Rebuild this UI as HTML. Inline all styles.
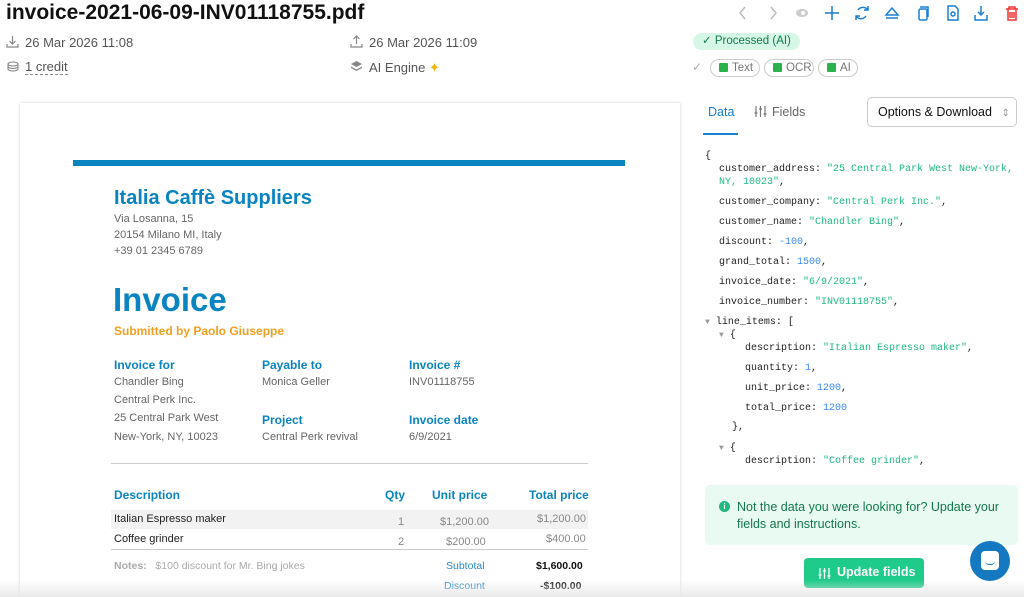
<!DOCTYPE html>
<html><head><meta charset="utf-8"><style>
*{margin:0;padding:0;box-sizing:border-box}
html,body{width:1024px;height:597px;overflow:hidden}
body{background:#fff;font-family:"Liberation Sans",sans-serif;position:relative;color:#111}
.a{position:absolute;white-space:nowrap}
.g{color:#555;font-size:13px}
.b{color:#0a84c1;font-weight:bold}
.iv{color:#666;font-size:11px}
.h{color:#0a84c1;font-weight:bold;font-size:12px}
.m{font-family:"Liberation Mono",monospace;font-size:10px;color:#222}
.s{color:#1fb981}.n{color:#3a86f0}
.tag{position:absolute;top:59px;height:18px;border:1px solid #ccc;border-radius:9px;font-size:11.5px;color:#777;line-height:16px;padding-left:8px}
.cb{display:inline-block;width:9px;height:9px;background:#2bb24c;border-radius:1px;margin-right:4px;vertical-align:-1px}
</style></head><body>
<div class="a" style="left:6px;top:1px;font-size:21px;font-weight:bold;color:#111">invoice-2021-06-09-INV01118755.pdf</div>
<svg class="a" style="left:6px;top:35px" width="13" height="13" fill="none" stroke="#888" stroke-width="1.2"><path d="M6.5 1v8M3.5 6l3 3 3-3M1 9v3h11V9"/></svg>
<div class="a g" style="left:25px;top:35px">26 Mar 2026 11:08</div>
<svg class="a" style="left:350px;top:35px" width="13" height="13" fill="none" stroke="#888" stroke-width="1.2"><path d="M6.5 9V1M3.5 4l3-3 3 3M1 9v3h11V9"/></svg>
<div class="a g" style="left:369px;top:35px">26 Mar 2026 11:09</div>
<svg class="a" style="left:6px;top:60px" width="13" height="13" fill="none" stroke="#888" stroke-width="1.1"><ellipse cx="7" cy="4" rx="5" ry="2"/><path d="M2 4v5c0 1 2 2 5 2s5-1 5-2V4M2 6.5c0 1 2 2 5 2s5-1 5-2"/></svg>
<div class="a g" style="left:25px;top:60px;border-bottom:1px dashed #888;line-height:14px">1 credit</div>
<svg class="a" style="left:350px;top:60px" width="13" height="13" fill="#888"><path d="M6.5 1L12 4 6.5 7 1 4z"/><path d="M1 6.5l5.5 3 5.5-3v1.5l-5.5 3-5.5-3z"/></svg>
<div class="a g" style="left:369px;top:60px">AI Engine <span style="color:#f0b400">✦</span></div>

<svg class="a" style="left:735px;top:4px" width="290" height="18" fill="none" stroke-width="1.5">
<path d="M10 3L5 9l5 6" stroke="#bbb"/><path d="M36 3l5 6-5 6" stroke="#bbb"/>
<ellipse cx="67" cy="9" rx="6" ry="4" fill="#ccc" stroke="none"/><circle cx="68" cy="9" r="2" fill="#fff"/>
<path d="M97 2v14M90 9h14" stroke="#1a7fd0"/>
<path d="M133 6a6 6 0 0 0-10 0M121 12a6 6 0 0 0 10 0M133 2v4h-4M121 16v-4h4" stroke="#1a7fd0"/>
<path d="M151 11l6-7 6 7zM151 14h12" stroke="#1a7fd0"/>
<rect x="184" y="5" width="8" height="11" rx="1.5" stroke="#1a7fd0"/><path d="M185 3h8v10" stroke="#1a7fd0"/>
<path d="M213 2h7l3 3v11h-10z" stroke="#1a7fd0"/><circle cx="218" cy="10" r="2" stroke="#1a7fd0"/>
<path d="M246 2v9M243 8l3 3 3-3M240 11v5h12v-5" stroke="#1a7fd0"/>
<path d="M271 5h12M274 5V3h6v2M273 5v11h8V5M275 8v6M277 8v6M279 8v6" stroke="#e33"/>
</svg>

<div class="a" style="left:693px;top:33px;height:17px;background:#d6f7e6;border-radius:9px;color:#137a4c;font-size:11.5px;line-height:17px;padding:0 9px">✓ Processed (AI)</div>
<div class="a" style="left:692px;top:60px;color:#aaa;font-size:12px">✓</div>
<div class="tag" style="left:710px;width:50px"><span class="cb"></span>Text</div>
<div class="tag" style="left:764px;width:50px"><span class="cb"></span>OCR</div>
<div class="tag" style="left:818px;width:40px"><span class="cb"></span>AI</div>

<div class="a" style="left:20px;top:103px;width:660px;height:494px;background:#fff;box-shadow:0 0 3px rgba(0,0,0,.18)"></div>
<div class="a" style="left:73px;top:160px;width:552px;height:6px;background:#0a84c1"></div>
<div class="a b" style="left:114px;top:187px;font-size:20px">Italia Caffè Suppliers</div>
<div class="a iv" style="left:114px;top:213px">Via Losanna, 15</div>
<div class="a iv" style="left:114px;top:229px">20154 Milano MI, Italy</div>
<div class="a iv" style="left:114px;top:245px">+39 01 2345 6789</div>
<div class="a b" style="left:113px;top:281px;font-size:33px">Invoice</div>
<div class="a" style="left:114px;top:324px;font-size:12px;font-weight:bold;color:#f0a020">Submitted by Paolo Giuseppe</div>
<div class="a h" style="left:114px;top:358px">Invoice for</div>
<div class="a h" style="left:262px;top:358px">Payable to</div>
<div class="a h" style="left:409px;top:358px">Invoice #</div>
<div class="a iv" style="left:114px;top:376px">Chandler Bing</div>
<div class="a iv" style="left:114px;top:394px">Central Perk Inc.</div>
<div class="a iv" style="left:114px;top:412px">25 Central Park West</div>
<div class="a iv" style="left:114px;top:431px">New-York, NY, 10023</div>
<div class="a iv" style="left:262px;top:376px">Monica Geller</div>
<div class="a iv" style="left:409px;top:376px">INV01118755</div>
<div class="a h" style="left:262px;top:413px">Project</div>
<div class="a h" style="left:409px;top:413px">Invoice date</div>
<div class="a iv" style="left:262px;top:431px">Central Perk revival</div>
<div class="a iv" style="left:409px;top:431px">6/9/2021</div>
<div class="a" style="left:111px;top:463px;width:477px;height:1px;background:#ccc"></div>
<div class="a h" style="left:114px;top:488px">Description</div>
<div class="a h" style="left:385px;top:488px">Qty</div>
<div class="a h" style="left:432px;top:488px">Unit price</div>
<div class="a h" style="left:529px;top:488px">Total price</div>
<div class="a" style="left:111px;top:510px;width:477px;height:19px;background:#f2f2f2"></div>
<div class="a" style="left:111px;top:549px;width:477px;height:1px;background:#ccc"></div>
<div class="a" style="left:114px;top:513px;font-size:11px;color:#222">Italian Espresso maker</div>
<div class="a" style="left:114px;top:533px;font-size:11px;color:#222">Coffee grinder</div>
<div class="a iv" style="left:398px;top:516px;color:#888">1</div>
<div class="a iv" style="left:398px;top:536px;color:#888">2</div>
<div class="a iv" style="left:440px;top:516px;color:#888">$1,200.00</div>
<div class="a iv" style="left:446px;top:536px;color:#888">$200.00</div>
<div class="a iv" style="left:537px;top:513px;color:#888">$1,200.00</div>
<div class="a iv" style="left:546px;top:533px;color:#888">$400.00</div>
<div class="a" style="left:114px;top:560px;font-size:10.5px;color:#aaa"><b>Notes:</b>&nbsp;&nbsp; $100 discount for Mr. Bing jokes</div>
<div class="a" style="left:446px;top:560px;font-size:10.5px;color:#2a8ac8">Subtotal</div>
<div class="a" style="left:536px;top:560px;font-size:10.5px;font-weight:bold;color:#111">$1,600.00</div>
<div class="a" style="left:444px;top:580px;font-size:10.5px;color:#2a8ac8">Discount</div>
<div class="a" style="left:540px;top:580px;font-size:10.5px;font-weight:bold;color:#222">-$100.00</div>

<div class="a" style="left:708px;top:105px;font-size:12.5px;color:#1a7fd0">Data</div>
<div class="a" style="left:703px;top:133px;width:35px;height:2px;background:#1a7fd0"></div>
<svg class="a" style="left:754px;top:105px" width="13" height="13" fill="none" stroke="#777" stroke-width="1.2"><path d="M2 1v11M6.5 1v11M11 1v11"/><path d="M0.5 8h3M5 4h3M9.5 9h3"/></svg>
<div class="a" style="left:772px;top:105px;font-size:12.5px;color:#666">Fields</div>
<div class="a" style="left:867px;top:97px;width:150px;height:30px;border:1px solid #ccc;border-radius:5px;font-size:12.5px;line-height:28px;padding-left:10px;color:#111">Options &amp; Download <span style="color:#999;font-size:10px;margin-left:6px">⇕</span></div>

<div class="a m" style="left:705px;top:151px">{</div>
<div class="a m" style="left:719px;top:164px">customer_address: <span class="s">"25 Central Park West New-York,</span></div>
<div class="a m" style="left:719px;top:177px"><span class="s">NY, 10023"</span>,</div>
<div class="a m" style="left:719px;top:197px">customer_company: <span class="s">"Central Perk Inc."</span>,</div>
<div class="a m" style="left:719px;top:217px">customer_name: <span class="s">"Chandler Bing"</span>,</div>
<div class="a m" style="left:719px;top:237px">discount: <span class="n">-100</span>,</div>
<div class="a m" style="left:719px;top:257px">grand_total: <span class="n">1500</span>,</div>
<div class="a m" style="left:719px;top:277px">invoice_date: <span class="s">"6/9/2021"</span>,</div>
<div class="a m" style="left:719px;top:297px">invoice_number: <span class="s">"INV01118755"</span>,</div>
<div class="a m" style="left:705px;top:317px"><span style="color:#999;font-size:8px">▼</span> line_items: [</div>
<div class="a m" style="left:719px;top:330px"><span style="color:#999;font-size:8px">▼</span> {</div>
<div class="a m" style="left:745px;top:343px">description: <span class="s">"Italian Espresso maker"</span>,</div>
<div class="a m" style="left:745px;top:363px">quantity: <span class="n">1</span>,</div>
<div class="a m" style="left:745px;top:383px">unit_price: <span class="n">1200</span>,</div>
<div class="a m" style="left:745px;top:403px">total_price: <span class="n">1200</span></div>
<div class="a m" style="left:732px;top:422px">},</div>
<div class="a m" style="left:719px;top:443px"><span style="color:#999;font-size:8px">▼</span> {</div>
<div class="a m" style="left:745px;top:456px">description: <span class="s">"Coffee grinder"</span>,</div>

<div class="a" style="left:705px;top:485px;width:313px;height:60px;background:#e8faf1;border-radius:5px"></div>
<div class="a" style="left:719px;top:501px;width:11px;height:11px;border-radius:50%;background:#1fb981;color:#fff;font-size:8px;font-weight:bold;text-align:center;line-height:11px">i</div>
<div class="a" style="left:737px;top:499px;font-size:12.5px;color:#137a4c;line-height:17px">Not the data you were looking for? Update your<br>fields and instructions.</div>
<div class="a" style="left:804px;top:558px;width:120px;height:30px;background:#1fcb8a;border-radius:4px"></div>
<svg class="a" style="left:818px;top:567px" width="13" height="13" fill="none" stroke="#fff" stroke-width="1.3"><path d="M2 1v11M6.5 1v11M11 1v11"/><path d="M0.5 8h3M5 4h3M9.5 9h3"/></svg>
<div class="a" style="left:837px;top:565px;color:#fff;font-size:12.5px;font-weight:bold">Update fields</div>
<div class="a" style="left:970px;top:541px;width:40px;height:40px;border-radius:50%;background:#1479c0"></div>
<div class="a" style="left:981px;top:551px;width:18px;height:19px;border-radius:4px;background:#fff"></div>
<div class="a" style="left:985px;top:561px;width:10px;height:4px;border-bottom:1.5px solid #1479c0;border-radius:0 0 6px 6px"></div>
<div class="a" style="left:0;top:580px;width:1024px;height:17px;background:linear-gradient(rgba(255,255,255,0),rgba(228,228,228,.8))"></div>
</body></html>
